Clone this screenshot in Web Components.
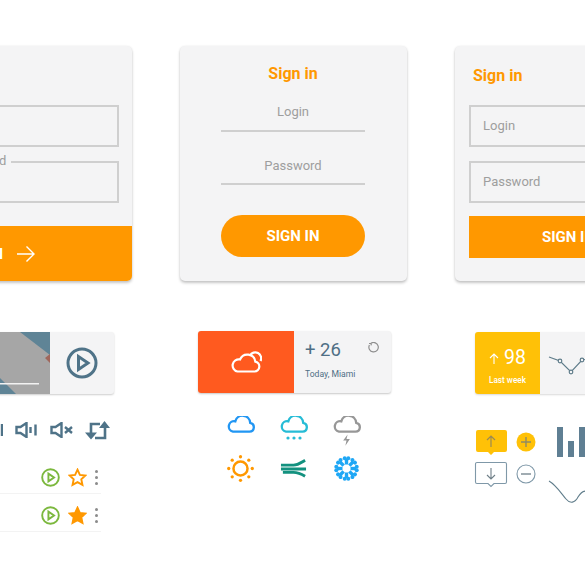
<!DOCTYPE html>
<html>
<head>
<meta charset="utf-8">
<title>UI kit</title>
<style>
  html, body { margin: 0; padding: 0; background: #fff; }
  body { width: 585px; height: 585px; overflow: hidden; font-family: Roboto, "Liberation Sans", sans-serif; }
</style>
</head>
<body>
<kit-board>
  <kit-column>
    <signin-card variant="notched"></signin-card>
    <media-widget></media-widget>
    <player-controls></player-controls>
    <track-list></track-list>
  </kit-column>
  <kit-column>
    <signin-card variant="underline"></signin-card>
    <weather-widget></weather-widget>
    <weather-icons></weather-icons>
  </kit-column>
  <kit-column>
    <signin-card variant="boxed"></signin-card>
    <stat-widget></stat-widget>
    <stat-tools></stat-tools>
  </kit-column>
</kit-board>

<script>
const ICONS = {
  cloud: '<path d="M7 17.500h18.500a5 5 0 0 0 .8-9.900A8.500 8.500 0 0 0 9.600 6 5.800 5.800 0 0 0 7 17.500z"/>',
  sun: '<circle cx="14" cy="14" r="7.300"/><g fill="currentColor" stroke="none"><circle cx="14" cy="1.800" r="1.700"/><circle cx="14" cy="26.200" r="1.700"/><circle cx="1.800" cy="14" r="1.700"/><circle cx="26.200" cy="14" r="1.700"/><circle cx="5.400" cy="5.400" r="1.700"/><circle cx="22.600" cy="5.400" r="1.700"/><circle cx="5.400" cy="22.600" r="1.700"/><circle cx="22.600" cy="22.600" r="1.700"/></g>',
  wind: '<path d="M1 6h13c5 0 7-2 12-5M1 10h26M3 13.500h11c5 0 7 1 12 4"/>',
  play: '<circle cx="16" cy="16" r="14"/><path d="M12.500 9.500v13l9.500-6.500z"/>',
  star: '<path d="M10 1.800l2.500 5.400 5.800.7-4.300 4 1.200 5.800L10 14.800l-5.200 2.900L6 11.900l-4.300-4 5.800-.7z"/>'
};

function icon(name, w, h, vb, attrs = '') {
  return `<svg width="${w}" height="${h}" viewBox="${vb}" stroke="currentColor" ${attrs.includes('fill=') ? '' : 'fill="none"'} ${attrs}>${ICONS[name]}</svg>`;
}

class KitBoard extends HTMLElement {
  constructor() {
    super();
    this.attachShadow({ mode: 'open' }).innerHTML = `
      <style>
        :host { display: flex; gap: 48px; width: 800px; margin-left: -95px; padding-top: 46px; }
      </style>
      <slot></slot>`;
  }
}

class KitColumn extends HTMLElement {
  constructor() {
    super();
    this.attachShadow({ mode: 'open' }).innerHTML = `
      <style>
        :host { display: flex; flex-direction: column; width: 227px; flex: none; }
      </style>
      <slot></slot>`;
  }
}

class SigninCard extends HTMLElement {
  connectedCallback() {
    const variant = this.getAttribute('variant');
    const root = this.attachShadow({ mode: 'open' });
    let body = '';
    if (variant === 'notched') {
      body = `
        <div class="fields">
          <div class="field"></div>
          <div class="field"><span>Password</span></div>
        </div>
        <div class="action"><b>SIGN IN</b><svg width="18" height="16" viewBox="0 0 18 16" fill="none" stroke="#fff" stroke-width="1.400"><path d="M0 8h17M9.500 .5L17 8l-7.500 7.500"/></svg></div>`;
    } else if (variant === 'underline') {
      body = `
        <h3>Sign in</h3>
        <div class="line">Login</div>
        <div class="line">Password</div>
        <div class="action">SIGN IN</div>`;
    } else {
      body = `
        <h3>Sign in</h3>
        <div class="box">Login</div>
        <div class="box">Password</div>
        <div class="action">SIGN IN</div>`;
    }
    root.innerHTML = `
      <style>
        :host {
          display: flex; flex-direction: column; box-sizing: border-box; height: 235px;
          background: #f4f4f5; border-radius: 5px; color: #9e9e9e; font-size: 13px;
          box-shadow: 0 2px 3px rgba(0,0,0,.22), 0 0 2px rgba(0,0,0,.08);
          font-family: Roboto, "Liberation Sans", sans-serif;
        }
        h3 { margin: 0; font-size: 16px; line-height: 20px; font-weight: 700; color: #ff9800; }
        .action {
          display: flex; align-items: center; justify-content: center; background: #ff9800;
          color: #fff; font-weight: 700; font-size: 15px;
        }
        b { font-weight: 700; }

        :host([variant=underline]) { padding: 18px 42px 0 41px; }
        :host([variant=underline]) h3 { text-align: center; }
        .line {
          box-sizing: border-box; height: 30px; padding-top: 3px; text-align: center; line-height: 14px;
          border-bottom: 2px solid #cfcfcf; margin-top: 18px;
        }
        .line + .line { margin-top: 23px; padding-top: 4px; }
        :host([variant=underline]) .action { height: 42px; border-radius: 21px; margin-top: 30px; }

        :host([variant=boxed]) { padding: 20px 14px 0 14px; }
        :host([variant=boxed]) h3 { margin-left: 4px; margin-bottom: 19px; }
        .box {
          box-sizing: border-box; height: 42px; border: 2px solid #cfcfcf; line-height: 38px;
          padding-left: 12px; margin-bottom: 14px;
        }
        .box + .box { margin-bottom: 13px; }
        :host([variant=boxed]) .action { height: 42px; }

        :host([variant=notched]) { padding-top: 59px; }
        .fields { padding: 0 13px 0 14px; }
        .field { box-sizing: border-box; height: 42px; border: 2px solid #cfcfcf; position: relative; }
        .field + .field { margin-top: 14px; }
        .field span { position: absolute; left: 23px; top: -9px; padding: 0 5px; background: #f4f4f5; line-height: 14px; }
        :host([variant=notched]) .action {
          flex: 1; margin-top: 23px; border-radius: 0 0 5px 5px; gap: 14px; padding-right: 52px;
        }
      </style>
      ${body}`;
  }
}

class MediaWidget extends HTMLElement {
  constructor() {
    super();
    this.attachShadow({ mode: 'open' }).innerHTML = `
      <style>
        :host {
          display: flex; width: 193px; height: 62px; margin: 51px 0 0 16px; background: #f4f4f5;
          border-radius: 3px; box-shadow: 0 1px 2px rgba(0,0,0,.2); overflow: hidden; color: #4f7388;
        }
        .art { flex: none; line-height: 0; }
        .btn { flex: 1; display: flex; align-items: center; justify-content: center; }
      </style>
      <div class="art">
        <svg width="129" height="62" viewBox="0 0 129 62">
          <rect width="129" height="62" fill="#a6a6a6"/>
          <path d="M99 0h30v23z" fill="#5f8496"/>
          <path d="M129 22v9l-5-5z" fill="#a0675c"/>
          <path d="M79 46l16 16H79z" fill="#5f8496"/>
          <rect x="79" y="51" width="39" height="1.500" fill="#f2f2f2"/>
        </svg>
      </div>
      <div class="btn">${icon('play', 32, 32, '0 0 32 32', 'stroke-width="3"')}</div>`;
  }
}

class PlayerControls extends HTMLElement {
  constructor() {
    super();
    this.attachShadow({ mode: 'open' }).innerHTML = `
      <style>
        :host { display: flex; align-items: center; gap: 12px; margin: 26px 0 0 95px; height: 20px; color: #4f7388; position: relative; }
        svg { flex: none; display: block; }
        .cut { margin-left: -22px; }
      </style>
      <svg class="cut" width="25" height="16" viewBox="0 0 25 16" fill="none" stroke="currentColor" stroke-width="2.400"><path d="M20 3l-4 5 4 5M24 2v12"/></svg>
      <svg width="23" height="16" viewBox="0 0 23 16" fill="none" stroke="currentColor" stroke-width="2.400"><path d="M1.500 5h4l6-4v14l-6-4h-4z"/><path d="M15.500 5v6M20.500 2.500v11"/></svg>
      <svg width="23" height="16" viewBox="0 0 23 16" fill="none" stroke="currentColor" stroke-width="2.400"><path d="M1.500 5h4l6-4v14l-6-4h-4z"/><path d="M15 5l7 6M22 5l-7 6"/></svg>
      <svg width="25" height="19" viewBox="0 0 25 19" fill="none" stroke="currentColor" stroke-width="2.600"><path d="M6 14V3h9M20 5v12H10"/><path d="M0 11.500h12L6 18.500zM14 7h11l-5.500-7z" fill="currentColor" stroke="none"/></svg>`;
  }
}

class TrackList extends HTMLElement {
  constructor() {
    super();
    const row = (filled) => `
      <div class="row">
        <span class="play">${icon('play', 19, 19, '0 0 32 32', 'stroke-width="3.200"')}</span>
        <span class="star">${icon('star', 19, 19, '0 0 20 20', `stroke-width="2"${filled ? ' fill="currentColor"' : ''}`)}</span>
        <span class="dots"><i></i><i></i><i></i></span>
      </div>`;
    this.attachShadow({ mode: 'open' }).innerHTML = `
      <style>
        :host { display: block; margin: 16px 0 0 0; width: 196px; }
        .row {
          display: flex; align-items: center; justify-content: flex-end; height: 38px; box-sizing: border-box;
          border-bottom: 1px solid #f3f3f3; padding: 6px 3px 0 0; gap: 7px;
        }
        .play { color: #7cb83e; line-height: 0; }
        .star { color: #ff9800; line-height: 0; margin-left: 1px; }
        .dots { display: flex; flex-direction: column; gap: 3.300px; width: 3px; margin-left: 1px; }
        .dots i { display: block; width: 3px; height: 3px; border-radius: 50%; background: #8b8b8b; }
      </style>
      ${row(false)}${row(true)}`;
  }
}

class WeatherWidget extends HTMLElement {
  constructor() {
    super();
    this.attachShadow({ mode: 'open' }).innerHTML = `
      <style>
        :host {
          display: flex; width: 193px; height: 62px; margin: 50px 0 0 18px; background: #f4f4f5;
          border-radius: 3px; box-shadow: 0 1px 2px rgba(0,0,0,.22); overflow: hidden; color: #4f6f85;
          font-family: Roboto, "Liberation Sans", sans-serif;
        }
        .tile { flex: none; width: 96px; background: #ff5a1f; display: flex; align-items: center; justify-content: center; color: #fff; }
        .info { flex: 1; position: relative; padding: 7px 0 0 11px; }
        .temp { font-size: 18.500px; line-height: 24px; }
        .place { font-size: 8.600px; line-height: 12px; margin-top: 6px; }
        .spin { position: absolute; top: 11px; right: 12px; color: #8f8f8f; line-height: 0; }
      </style>
      <div class="tile">
        <svg width="32" height="22" viewBox="0 0 32 22" fill="none" stroke="currentColor" stroke-width="2.200">
          <path d="M7.500 20.500h17a5 5 0 0 0 .8-9.900A8 8 0 0 0 10 8.500a6 6 0 0 0-2.500 12z"/>
          <path d="M20 4.500a5 5 0 0 1 10.500 5.500"/>
        </svg>
      </div>
      <div class="info">
        <div class="temp">+ 26</div>
        <div class="place">Today, Miami</div>
        <div class="spin"><svg width="11" height="11" viewBox="0 0 11 11" fill="none" stroke="currentColor" stroke-width="1.200"><path d="M3 1.300a4.700 4.700 0 1 1-1.600 1.800M1 1.500l2-.2.300 2"/></svg></div>
      </div>`;
  }
}

class WeatherIcons extends HTMLElement {
  constructor() {
    super();
    const lobes = [0, 45, 90, 135, 180, 225, 270, 315].map(a =>
      `<g transform="rotate(${a} 12.500 12.500)"><path d="M12.500 8.500V3"/><circle cx="10.700" cy="2.300" r="2" fill="currentColor" stroke="none"/><circle cx="14.300" cy="2.300" r="2" fill="currentColor" stroke="none"/></g>`).join('');
    this.attachShadow({ mode: 'open' }).innerHTML = `
      <style>
        :host { display: grid; grid-template-columns: repeat(3, 53px); grid-template-rows: 38px 28px; margin: 23px 0 0 34px; justify-items: center; align-items: start; }
        div { line-height: 0; }
        svg { display: block; }
        .a { color: #2196f3; } .b { color: #26bcd6; } .c { color: #979797; }
        .d { color: #ff9800; } .e { color: #13917f; } .f { color: #1fa7f5; }
        .d, .e, .f { align-self: center; }
      </style>
      <div class="a">${icon('cloud', 30, 17, '0 0 32 19', 'stroke-width="2.600"')}</div>
      <div class="b">
        ${icon('cloud', 30, 17, '0 0 32 19', 'stroke-width="2.600"')}
        <svg width="17" height="4" viewBox="0 0 17 4" style="margin:3px auto 0"><g fill="currentColor"><circle cx="3" cy="2" r="1.600"/><circle cx="9" cy="2" r="1.600"/><circle cx="15" cy="2" r="1.600"/></g></svg>
      </div>
      <div class="c">
        ${icon('cloud', 30, 17, '0 0 32 19', 'stroke-width="2.600"')}
        <svg width="9" height="12" viewBox="0 0 8 10" style="margin:1px auto 0"><path d="M5 0L1 5.500h3L3 10l4-6H4z" fill="currentColor"/></svg>
      </div>
      <div class="d">${icon('sun', 27, 27, '0 0 28 28', 'stroke-width="2.600"')}</div>
      <div class="e">${icon('wind', 27, 19, '0 0 28 19', 'stroke-width="3"')}</div>
      <div class="f"><svg width="25" height="25" viewBox="0 0 25 25" fill="none" stroke="currentColor" stroke-width="3.400">${lobes}</svg></div>`;
  }
}

class StatWidget extends HTMLElement {
  constructor() {
    super();
    this.attachShadow({ mode: 'open' }).innerHTML = `
      <style>
        :host {
          display: flex; width: 193px; height: 62px; margin: 51px 0 0 20px; background: #f4f4f5;
          border-radius: 3px; box-shadow: 0 1px 2px rgba(0,0,0,.15); overflow: hidden;
          font-family: Roboto, "Liberation Sans", sans-serif;
        }
        .tile { flex: none; width: 65px; background: #ffc107; color: #fff; text-align: center; padding-top: 14px; box-sizing: border-box; }
        .num { display: flex; align-items: center; justify-content: center; gap: 5px; font-size: 19.500px; line-height: 24px; }
        .sub { font-size: 8.200px; line-height: 11px; margin-top: 5px; font-weight: 500; }
        .spark { flex: 1; line-height: 0; }
      </style>
      <div class="tile">
        <div class="num">
          <svg width="10" height="11" viewBox="0 0 10 11" fill="none" stroke="#fff" stroke-width="1.100"><path d="M5 11V1M1 5l4-4 4 4"/></svg>98
        </div>
        <div class="sub">Last week</div>
      </div>
      <div class="spark">
        <svg width="128" height="62" viewBox="0 0 128 62" fill="none" stroke="#607d8b" stroke-width="1.200">
          <path d="M9 25l11 4 11 11 11-12 12-3 60-12"/>
          <g fill="#f4f4f5"><circle cx="20" cy="29" r="1.800"/><circle cx="31" cy="40" r="1.800"/><circle cx="42" cy="28" r="1.800"/></g>
        </svg>
      </div>`;
  }
}

class StatTools extends HTMLElement {
  constructor() {
    super();
    this.attachShadow({ mode: 'open' }).innerHTML = `
      <style>
        :host { display: flex; margin: 33px 0 0 20px; width: 210px; }
        svg { display: block; flex: none; overflow: visible; }
        .pairs { display: grid; grid-template-columns: 33px 20px; column-gap: 8px; row-gap: 6px; align-content: start; justify-items: center; padding-top: 3px; }
        .round { margin-top: 2px; }
        .charts { margin-left: 20px; }
      </style>
      <div class="pairs">
        <svg width="33" height="26" viewBox="0 0 33 26"><path d="M3 0h27a2 2 0 0 1 2 2v18a2 2 0 0 1-2 2H19l-3 3-3-3H3a2 2 0 0 1-2-2V2a2 2 0 0 1 2-2z" fill="#ffc107"/><path d="M16 17V6M12 10l4-4 4 4" fill="none" stroke="#9a8a55" stroke-width="1.200"/></svg>
        <svg class="round" width="20" height="20" viewBox="0 0 20 20"><circle cx="10" cy="10" r="9.500" fill="#ffc107"/><path d="M10 5v10M5 10h10" stroke="#8f8a66" stroke-width="1.400"/></svg>
        <svg width="33" height="26" viewBox="0 0 33 26" fill="none" stroke="#7f98a8" stroke-width="1.100"><path d="M2 .5h28A1.500 1.500 0 0 1 31.500 2v18a1.500 1.500 0 0 1-1.500 1.500H19l-3 3-3-3H2A1.500 1.500 0 0 1 .5 20V2A1.500 1.500 0 0 1 2 .5z"/><path d="M16 6v11M12 13l4 4 4-4" stroke="#6f7f88"/></svg>
        <svg class="round" width="20" height="20" viewBox="0 0 20 20" fill="none" stroke="#7f98a8" stroke-width="1.100"><circle cx="10" cy="10" r="9"/><path d="M5 10h10" stroke="#6f7f88" stroke-width="1.300"/></svg>
      </div>
      <div class="charts">
        <svg width="60" height="80" viewBox="0 0 60 80">
          <g fill="#5f7f93"><rect x="1" y="0" width="6" height="30"/><rect x="12" y="14" width="6" height="16"/><rect x="23" y="0" width="6" height="30"/></g>
          <path d="M-7 54C0 58 5 66 10 72c4 5 9 4 12-2 3-5 5-6 8-6" fill="none" stroke="#607d8b" stroke-width="1.100"/>
        </svg>
      </div>`;
  }
}

customElements.define('kit-board', KitBoard);
customElements.define('kit-column', KitColumn);
customElements.define('signin-card', SigninCard);
customElements.define('media-widget', MediaWidget);
customElements.define('player-controls', PlayerControls);
customElements.define('track-list', TrackList);
customElements.define('weather-widget', WeatherWidget);
customElements.define('weather-icons', WeatherIcons);
customElements.define('stat-widget', StatWidget);
customElements.define('stat-tools', StatTools);
</script>
</body>
</html>
